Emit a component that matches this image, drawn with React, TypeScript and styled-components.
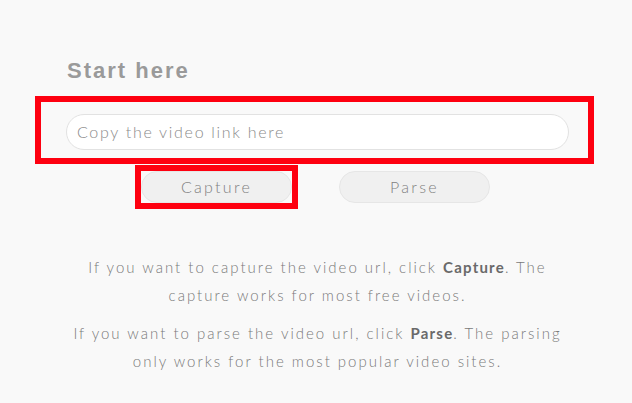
import React from "react";
import styled, { createGlobalStyle } from "styled-components";

const Global = createGlobalStyle`
  html, body { margin: 0; padding: 0; background: #f9f9f9; }
  body { font-family: "Lato", "Open Sans", sans-serif; }
`;

const Page = styled.main`
  width: 632px;
  height: 403px;
  background: #f9f9f9;
  padding-top: 58px;
  box-sizing: border-box;
  overflow: hidden;
`;

const Heading = styled.h2`
  margin: 0 0 13px 67px;
  font-family: "Liberation Sans", Arial, sans-serif;
  font-weight: 700;
  font-size: 22px;
  line-height: 25px;
  letter-spacing: 2px;
  color: #9a9a9a;
`;

const Highlight = styled.div`
  border: 6px solid #fe0010;
  box-sizing: border-box;
`;

const InputBox = styled(Highlight)`
  margin-left: 35px;
  width: 559px;
  height: 68px;
  padding: 12px 19px 8px 25px;
`;

const UrlInput = styled.input`
  width: 100%;
  height: 36px;
  box-sizing: border-box;
  border: 1px solid #e2e2e2;
  border-radius: 18px;
  background: #fff;
  padding: 0 10px 2px;
  font-family: "Lato", sans-serif;
  font-weight: 300;
  font-size: 16px;
  letter-spacing: 1.7px;
  color: #888;
  outline: none;
  &::placeholder { color: #8a8a8a; }
`;

const ButtonRow = styled.div`
  display: flex;
  align-items: center;
  gap: 41px;
  padding-left: 135px;
  margin-top: 1px;
`;

const Button = styled.button`
  width: 151px;
  height: 32px;
  box-sizing: border-box;
  border: 1px solid #e6e6e6;
  border-radius: 16px;
  background: #f0f0f0;
  font-family: "Lato", sans-serif;
  font-weight: 300;
  font-size: 16px;
  letter-spacing: 2.3px;
  color: #808080;
  display: block;
  padding: 0 0 2px;
`;

const Info = styled.section`
  width: 503px;
  margin: 44px 0 0 66px;
  text-align: center;
`;

const Para = styled.p`
  margin: 0 0 10px;
  font-family: "Lato", sans-serif;
  font-weight: 300;
  font-size: 15px;
  line-height: 28px;
  letter-spacing: 2px;
  color: #7a7a7a;
  b { font-weight: 700; color: #6a6a6a; letter-spacing: 1.2px; }
`;

export default function App() {
  return (
    <>
      <Global />
      <Page>
        <Heading>Start here</Heading>
        <InputBox>
          <UrlInput placeholder="Copy the video link here" />
        </InputBox>
        <ButtonRow>
          <Highlight>
            <Button>Capture</Button>
          </Highlight>
          <Button>Parse</Button>
        </ButtonRow>
        <Info>
          <Para>
            If you want to capture the video url, click <b>Capture</b>. The
            capture works for most free videos.
          </Para>
          <Para>
            If you want to parse the video url, click <b>Parse</b>. The parsing
            only works for the most popular video sites.
          </Para>
        </Info>
      </Page>
    </>
  );
}
